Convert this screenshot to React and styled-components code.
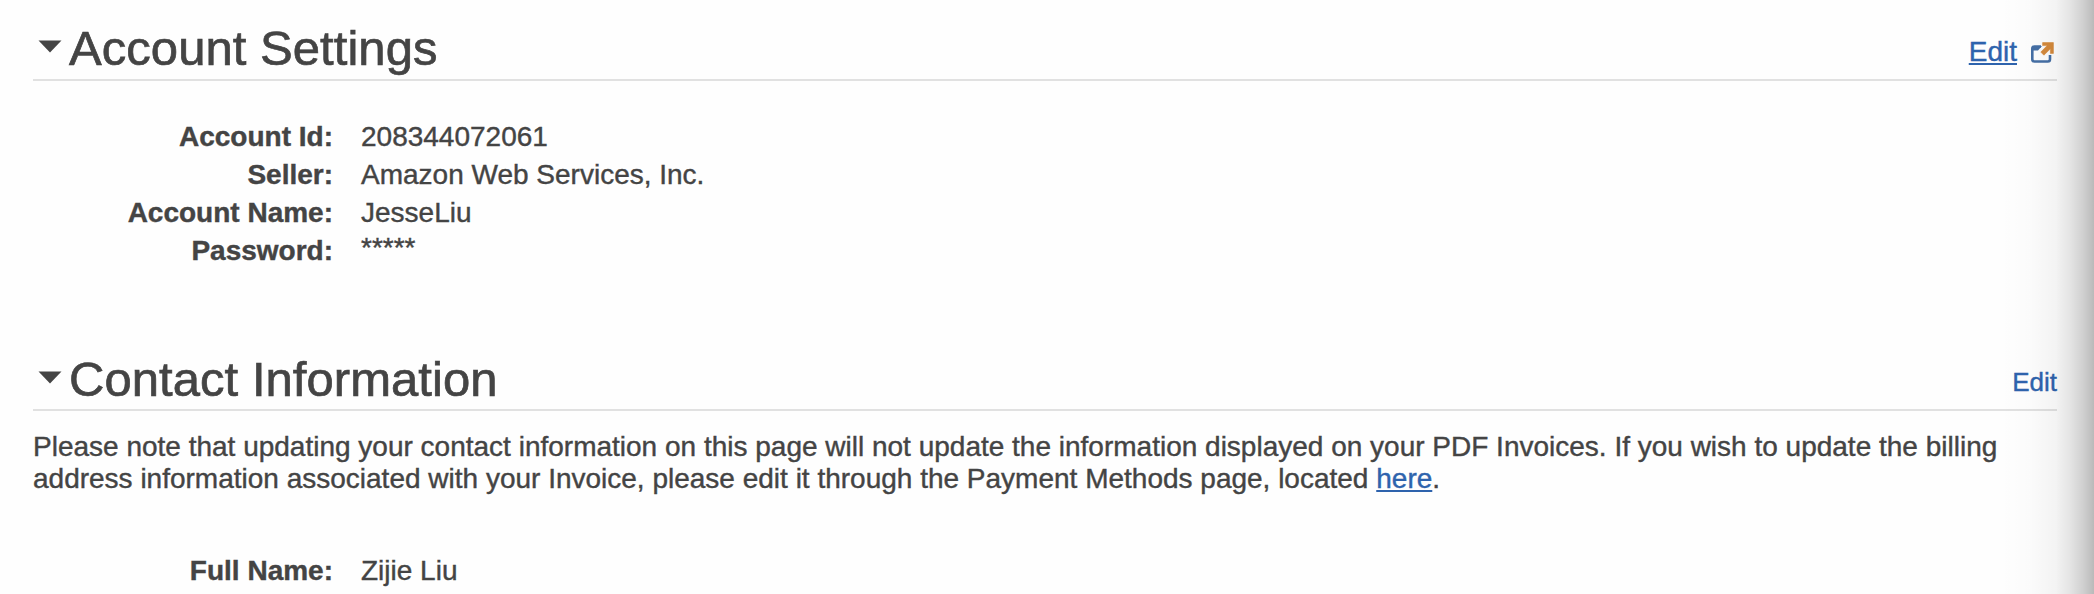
import React from 'react';
import styled, { createGlobalStyle } from 'styled-components';

const GlobalStyle = createGlobalStyle`
  * { box-sizing: border-box; }
  body {
    margin: 0;
    background: #fefefe;
    color: #444;
    font: 28px/32px "Liberation Sans", Arial, sans-serif;
    -webkit-text-stroke: 0.4px currentColor;
  }
`;

const Page = styled.main`
  position: relative;
  height: 594px;
  overflow: hidden;
  padding: 0 37px 0 33px;
`;

const EdgeShadow = styled.div`
  position: absolute;
  inset: 0 0 0 auto;
  width: 94px;
  pointer-events: none;
  background: linear-gradient(
    to right,
    rgba(0, 0, 0, 0) 0,
    rgba(0, 0, 0, 0.012) 30px,
    rgba(0, 0, 0, 0.045) 56px,
    rgba(0, 0, 0, 0.1) 70px,
    rgba(0, 0, 0, 0.19) 84px,
    rgba(0, 0, 0, 0.27) 94px
  );
`;

const Header = styled.header`
  display: flex;
  align-items: flex-end;
  justify-content: space-between;
  height: 81px;
  border-bottom: 2px solid #e1e1e1;
`;

const Toggle = styled.div`
  display: flex;
  align-items: center;
  padding: 0 0 ${(p) => p.$bottom}px 5px;
`;

const Caret = styled.svg`
  display: block;
  width: 24px;
  height: 13px;
  margin: 0 7px 4px 0;
  fill: #444;
`;

const Title = styled.h2`
  margin: 0;
  font-size: 49px;
  line-height: 56px;
  font-weight: 400;
  letter-spacing: 0.05px;
  -webkit-text-stroke-width: 0.7px;
`;

const Actions = styled.div`
  display: flex;
  align-items: center;
  padding-bottom: 11px;
`;

const Link = styled.a`
  color: #2e63ad;
  font-size: ${(p) => p.$size || 28}px;
  text-decoration: ${(p) => (p.$plain ? 'none' : 'underline')};
  text-decoration-thickness: 2px;
  text-underline-offset: 2px;
  text-decoration-skip-ink: none;
`;

const ExternalIcon = styled.svg`
  display: block;
  width: 24px;
  height: 22px;
  margin: 2px 3px 0 13px;
`;

const Fields = styled.dl`
  display: grid;
  grid-template-columns: 300px 1fr;
  column-gap: 28px;
  grid-auto-rows: 38px;
  line-height: 38px;
  margin: 0;
  padding-top: ${(p) => p.$top}px;
`;

const Label = styled.dt`
  font-weight: 700;
  text-align: right;
`;

const Value = styled.dd`
  margin: 0;
  line-height: ${(p) => (p.$masked ? 32 : 38)}px;
`;

const FirstSection = styled.section`
  height: 330px;
`;

const Note = styled.p`
  margin: 20px 0 0;
  white-space: nowrap;
`;

const accountFields = [
  ['Account Id:', '208344072061'],
  ['Seller:', 'Amazon Web Services, Inc.'],
  ['Account Name:', 'JesseLiu'],
  ['Password:', '*****'],
];

const contactFields = [['Full Name:', 'Zijie Liu']];

function SectionTitle({ bottom, children }) {
  return (
    <Toggle $bottom={bottom}>
      <Caret viewBox="0 0 24 13"><path d="M0.5 0.5h23L12 12.5z" /></Caret>
      <Title>{children}</Title>
    </Toggle>
  );
}

function FieldList({ items, top }) {
  return (
    <Fields $top={top}>
      {items.map(([label, value]) => (
        <React.Fragment key={label}>
          <Label>{label}</Label>
          <Value $masked={value.startsWith('*')}>{value}</Value>
        </React.Fragment>
      ))}
    </Fields>
  );
}

export default function App() {
  return (
    <Page>
      <GlobalStyle />
      <FirstSection>
        <Header>
          <SectionTitle bottom={3}>Account Settings</SectionTitle>
          <Actions>
            <Link>Edit</Link>
            <ExternalIcon viewBox="0 0 24 22">
              <path d="M11 4.5H4.5Q2.3 4.5 2.3 6.7V17.3Q2.3 19.5 4.5 19.5H17.8Q20 19.5 20 17.3V13" fill="none" stroke="#456fa5" strokeWidth="2.6" />
              <path d="M3 4h9L8 8.5H3z" fill="#456fa5" />
              <path d="M12.6 0.6H23.4V11.4H20.4V6.8L13.9 13.2L10.8 10.1L17.2 3.6H12.6Z" fill="#d58a3c" stroke="#d58a3c" strokeWidth="0.6" />
            </ExternalIcon>
          </Actions>
        </Header>
        <FieldList items={accountFields} top={37} />
      </FirstSection>
      <section>
        <Header>
          <SectionTitle bottom={2}>Contact Information</SectionTitle>
          <Actions>
            <Link $plain $size={26}>Edit</Link>
          </Actions>
        </Header>
        <Note>
          Please note that updating your contact information on this page will not update the information displayed on your PDF Invoices. If you wish to update the billing
          <br />
          address information associated with your Invoice, please edit it through the Payment Methods page, located <Link>here</Link>.
        </Note>
        <FieldList items={contactFields} top={57} />
      </section>
      <EdgeShadow />
    </Page>
  );
}
